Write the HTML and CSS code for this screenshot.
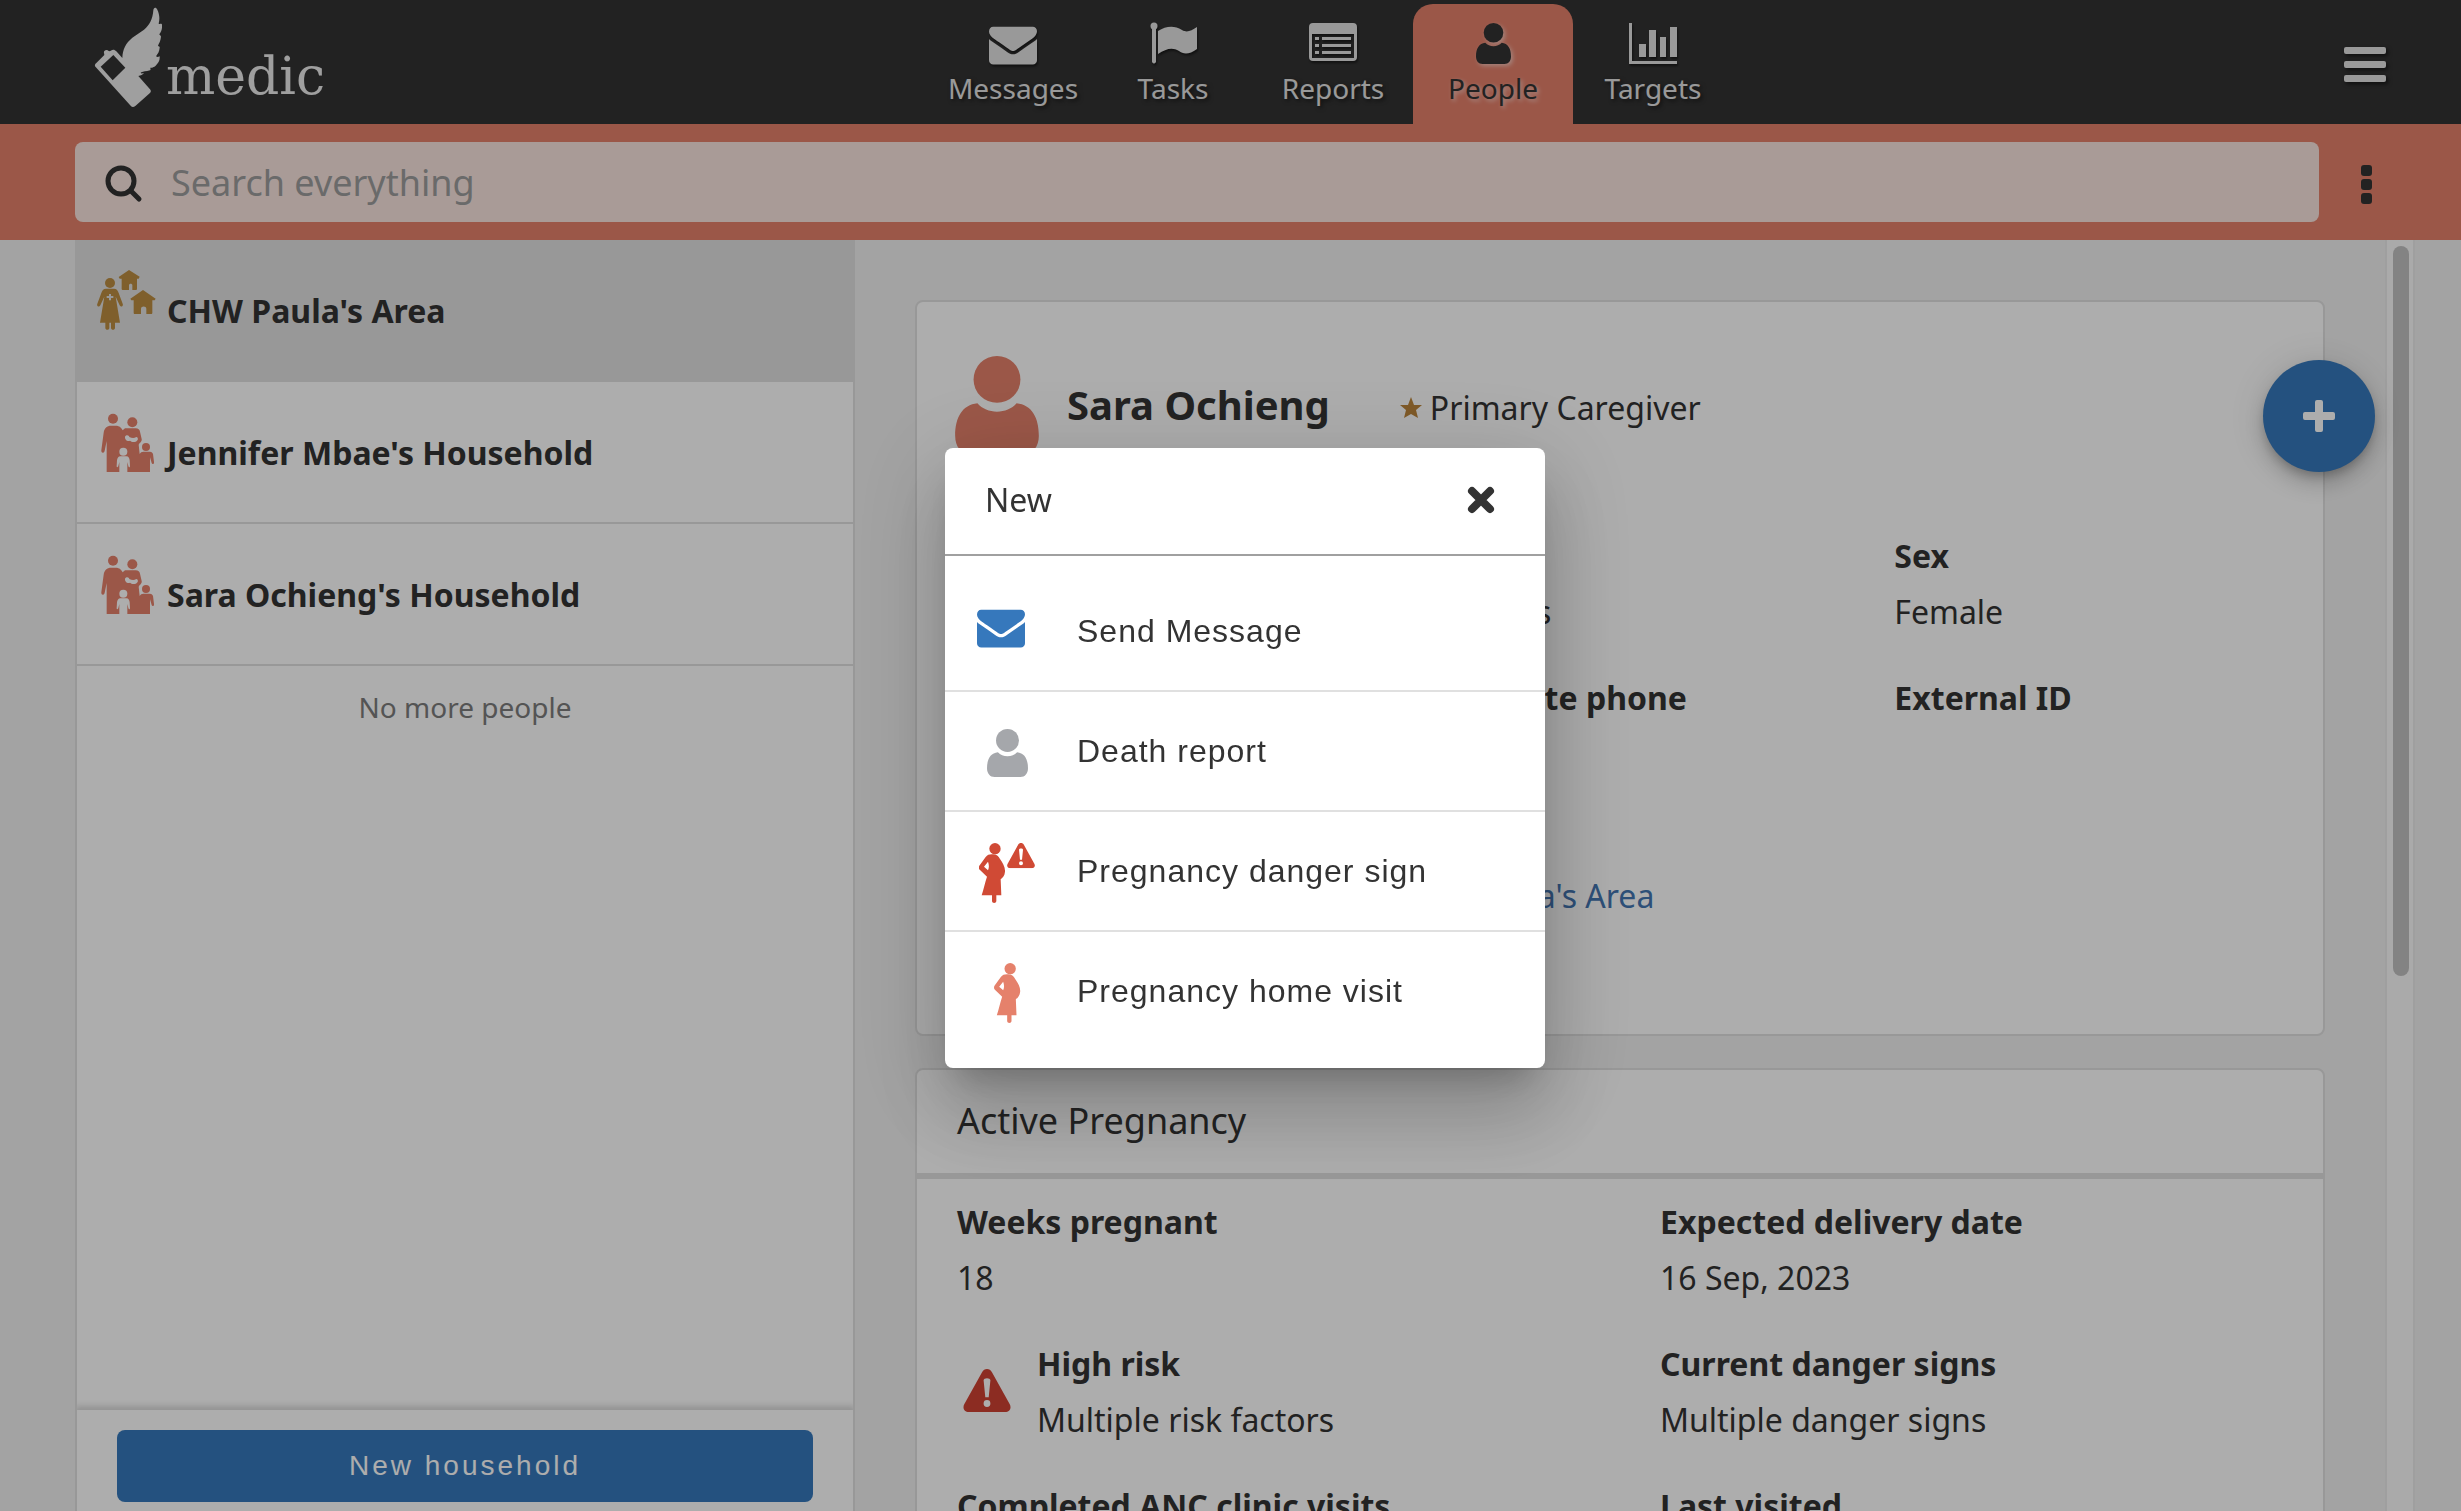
FILE: index.html
```html
<!DOCTYPE html>
<html lang="en">
<head>
<meta charset="utf-8">
<title>People - Medic</title>
<link rel="stylesheet" href="styles.css">
</head>
<body>
<svg class="sprite" aria-hidden="true">
  <symbol id="envelope" viewBox="0 0 1792 1792"><path d="M1792 710v794q0 66-47 113t-113 47h-1472q-66 0-113-47t-47-113v-794q44 49 101 87 362 246 497 345 57 42 92.500 65.500t94.500 48 110 24.500h2q51 0 110-24.500t94.500-48 92.500-65.500q170-123 498-345 57-39 100-87zm0-294q0 79-49 151t-122 123q-376 261-468 325-10 7-42.500 31t-54 38.500-52 32.500-57.500 27-50 9h-2q-23 0-50-9t-57.500-27-52-32.500-54-38.500-42.500-31q-91-64-262-182.500t-205-142.500q-62-42-117-115.500t-55-136.500q0-78 41.500-130t118.500-52h1472q65 0 112.500 47t47.500 113z"/></symbol>
  <symbol id="person" viewBox="0 0 35 41"><circle cx="17.500" cy="9.800" r="9.800"/><path d="M9.300 19.800c2 2.300 5 3.500 8.200 3.500s6.200-1.200 8.200-3.500c6.300.7 9.300 5.800 9.300 13.700 0 4.500-2.500 7.500-6.500 7.500h-22C2.500 41 0 38 0 33.500c0-7.900 3-13 9.300-13.700z"/></symbol>
  <symbol id="pregnant" viewBox="0 0 80 180"><circle cx="48" cy="17" r="17"/><path fill-rule="evenodd" d="M38 34c12-2 20 4 25 14 8 12 16 24 15 38-1 12-7 18-13 23l2 48H52v17c0 8-13 8-13 0v-17H8c6-18 10-38 16-56L3 81c-5-4-4-10-1-14l18-25c5-6 10-8 18-8zM27 56L15 71l12 11c4-9 3-18 0-26z"/></symbol>
  <symbol id="warning" viewBox="0 0 84 76"><path fill-rule="evenodd" d="M33 6c4-8 14-8 18 0l31 56c4 7 0 14-8 14H10C2 76-2 69 2 62zM36 20l3 30h6l3-30c0-5-12-5-12 0zM42 55a6 6 0 1 0 0 12 6 6 0 0 0 0-12z"/></symbol>
  <symbol id="family" viewBox="0 0 180 180">
    <circle cx="48" cy="20" r="15"/><circle cx="106" cy="31" r="15"/><circle cx="147" cy="105" r="12"/>
    <path d="M29 180V87l-6 29c-2 9-11 8-10-1l7-53c2-14 10-21 22-21h14c12 0 18 7 21 14l7-6h32c8 0 12 4 13 10l5 22c1 5-2 9-6 12l-3 5 3 28c3-5 6-7 11-7h20c5 0 8 3 9 7l3 24c1 7-6 8-7 3l-5-17v46z"/>
    <path class="family-gap" d="M84 74c4-7 12-5 13 1 8 4 15 4 21 0 7 2 6 11-2 14-8 3-13 0-17-3-7 4-16-3-15-12z"/>
    <circle class="family-gap" cx="79" cy="119" r="12"/>
    <path class="family-gap" d="M70 133h18c7 0 9 5 10 12l1 17c0 5-4 5-5 0l-3-12v30H67v-30l-3 12c-1 5-6 4-5 0l1-17c1-7 4-12 10-12z"/>
  </symbol>
  <symbol id="area" viewBox="0 0 180 180">
    <circle cx="39" cy="39" r="15"/>
    <path fill-rule="evenodd" d="M27 56h24c8 0 12 6 14 13l12 32c3 8-5 12-9 5L56 80l13 78H54v16c0 7-12 7-12 0v-16h-5v16c0 7-12 7-12 0v-16H9l13-78-12 26c-4 7-12 3-9-5l12-32c2-7 6-13 14-13zM36 72v6h-7v6h7v7h6v-7h7v-6h-7v-6z"/>
    <path d="M96 0l32 20-3 6h-5v31c0 2-1 3-3 3h-11V46c0-6-10-6-10 0v14H77c-2 0-3-1-3-3V26h-6l-3-5z"/>
    <path d="M138 60l38 26-3 5h-7v37c0 2-1 4-4 4h-14v-16c0-9-16-9-16 0v16h-19c-2 0-3-2-3-4V91h-7l-3-5z"/>
  </symbol>
</svg>

<div class="app">
  <header class="topbar">
    <a class="brand" href="#" aria-label="medic home">
      <svg class="brand-mark" viewBox="12 9 204 306" aria-hidden="true"><path fill-rule="evenodd" d="M15 187c-1-5 1-8 4-10l24-24c0-4-3-8 0-12 5-5 10-3 13 0 5 2 8-4 14-4 3 0 6 2 9 5l18 20c1-27 10-44 30-61l35-24c16-13 26-30 28-58 1-10 8-10 12-2 6 13 8 26 4 42 4 2 10-2 10 4 1 12-2 20-8 28 1 4 5 3 5 7-1 13-6 19-9 27 2 3 6 2 5 6-1 12-6 19-10 24-1 5 5 4 10 2 1 14-4 19-12 28-3 4-8 4-10 6l-6 0c0 5 2 6-1 8-12 3-20 4-26 6-4 2-1 5 8 2-3 5-10 8-17 9l35 40c4 5 3 9-1 12l-43 38c-6 5-10 4-14-1zM70 153L32 188l36 41 38-38z"/></svg>
      <span class="brand-name">medic</span>
    </a>
    <nav class="tabs">
      <a class="tab" href="#"><svg class="tab-icon" aria-hidden="true"><use href="#envelope"/></svg>Messages</a>
      <a class="tab" href="#"><svg class="tab-icon" viewBox="0 0 48 48" aria-hidden="true"><circle cx="5" cy="6" r="3.500"/><path d="M3 6h4v36q-2 3-4 0zM9 11c8-5 16-6 24-1 5 3 9 1 15-3v22c-8 6-14 5-18 2-7-4-13-2-21 3z"/></svg>Tasks</a>
      <a class="tab" href="#"><svg class="tab-icon" viewBox="0 0 48 48" aria-hidden="true"><path fill-rule="evenodd" d="M4 3h40a4 4 0 0 1 4 4v30a4 4 0 0 1-4 4H4a4 4 0 0 1-4-4V7a4 4 0 0 1 4-4zM3 14v24h42V14z"/><path d="M6 17h4v3H6zM13 17h29v3H13zM6 24h4v3H6zM13 24h29v3H13zM6 31h4v3H6zM13 31h29v3H13z"/></svg>Reports</a>
      <a class="tab tab-active" href="#"><svg class="tab-icon tab-icon-person" aria-hidden="true"><use href="#person"/></svg>People</a>
      <a class="tab" href="#"><svg class="tab-icon" viewBox="0 0 48 48" aria-hidden="true"><path d="M0 3h3v38h45v3H0zM10 24h7v13h-7zM20 10h7v27h-7zM31 17h6v20h-6zM41 7h7v30h-7z"/></svg>Targets</a>
    </nav>
    <button class="menu-button" type="button" aria-label="Menu"><span></span><span></span><span></span></button>
  </header>

  <form class="searchbar">
    <label class="search">
      <svg class="search-icon" viewBox="0 0 38 38" aria-hidden="true"><circle cx="16" cy="16" r="13"/><path d="M26 26l8 8"/></svg>
      <input class="search-input" type="search" placeholder="Search everything" aria-label="Search everything">
    </label>
    <button class="more-button" type="button" aria-label="More options"><span></span><span></span><span></span></button>
  </form>

  <div class="main">
    <aside class="sidebar">
      <ul class="places">
        <li><a class="place place-selected" href="#"><svg class="place-icon place-icon-area" aria-hidden="true"><use href="#area"/></svg><span>CHW Paula's Area</span></a></li>
        <li><a class="place" href="#"><svg class="place-icon" aria-hidden="true"><use href="#family"/></svg><span>Jennifer Mbae's Household</span></a></li>
        <li><a class="place" href="#"><svg class="place-icon" aria-hidden="true"><use href="#family"/></svg><span>Sara Ochieng's Household</span></a></li>
      </ul>
      <p class="places-end">No more people</p>
      <div class="sidebar-actions"><button class="primary-button" type="button">New household</button></div>
    </aside>

    <main class="content">
      <div class="cards">
        <section class="card profile">
          <div class="profile-head">
            <svg class="profile-icon" aria-hidden="true"><use href="#person"/></svg>
            <h1 class="profile-name">Sara Ochieng</h1>
            <p class="profile-role"><svg class="star" viewBox="0 0 22 22" aria-hidden="true"><path d="M11 0l3 8h8l-6 5 2 8-7-4-7 4 2-8-6-5h8z"/></svg>Primary Caregiver</p>
          </div>
          <dl class="fields fields-three">
            <div class="field"><dt>Name</dt><dd>Sara</dd></div>
            <div class="field"><dt>Age</dt><dd>36 years</dd></div>
            <div class="field"><dt>Sex</dt><dd>Female</dd></div>
            <div class="field"><dt>Phone</dt><dd></dd></div>
            <div class="field"><dt>Alternate phone</dt><dd></dd></div>
            <div class="field"><dt>External ID</dt><dd></dd></div>
            <div class="field field-wide"><dt>Belongs to</dt><dd class="lineage"><a href="#">Sara Ochieng's Household</a><a href="#">CHW Paula's Area</a></dd></div>
          </dl>
        </section>

        <section class="card">
          <h2 class="card-title">Active Pregnancy</h2>
          <dl class="fields fields-two">
            <div class="field"><dt>Weeks pregnant</dt><dd>18</dd></div>
            <div class="field"><dt>Expected delivery date</dt><dd>16 Sep, 2023</dd></div>
            <div class="field field-icon"><dt>High risk</dt><dd>Multiple risk factors</dd><dd class="risk"><svg class="risk-icon" aria-hidden="true"><use href="#warning"/></svg></dd></div>
            <div class="field"><dt>Current danger signs</dt><dd>Multiple danger signs</dd></div>
            <div class="field"><dt>Completed ANC clinic visits</dt><dd></dd></div>
            <div class="field"><dt>Last visited</dt><dd></dd></div>
          </dl>
        </section>
      </div>
      <div class="scroll-track" aria-hidden="true"><div class="scroll-thumb"></div></div>
      <button class="fab" type="button" aria-label="New"><svg class="fab-icon" viewBox="0 0 32 32" aria-hidden="true"><path d="M14 0h4q2 0 2 2v10h10q2 0 2 2v4q0 2-2 2H20v10q0 2-2 2h-4q-2 0-2-2V20H2q-2 0-2-2v-4q0-2 2-2h10V2q0-2 2-2z"/></svg></button>
    </main>
  </div>
</div>

<div class="overlay">
  <div class="dialog" role="dialog" aria-modal="true" aria-labelledby="dialog-title">
    <div class="dialog-head">
      <h2 class="dialog-title" id="dialog-title">New</h2>
      <button class="close-button" type="button" aria-label="Close"><svg class="close-icon" viewBox="0 0 28 28" aria-hidden="true"><path d="M5 5l18 18M23 5L5 23"/></svg></button>
    </div>
    <ul class="actions">
      <li><button class="action" type="button"><span class="action-icon action-icon-start"><svg class="icon-envelope" aria-hidden="true"><use href="#envelope"/></svg></span>Send Message</button></li>
      <li><button class="action" type="button"><span class="action-icon"><svg class="icon-person" aria-hidden="true"><use href="#person"/></svg></span>Death report</button></li>
      <li><button class="action" type="button"><span class="action-icon"><svg class="icon-danger" viewBox="0 0 180 180" aria-hidden="true"><use href="#pregnant" x="6" width="80" height="180"/><use href="#warning" x="90" width="84" height="76"/></svg></span>Pregnancy danger sign</button></li>
      <li><button class="action" type="button"><span class="action-icon"><svg class="icon-visit" aria-hidden="true"><use href="#pregnant"/></svg></span>Pregnancy home visit</button></li>
    </ul>
  </div>
</div>
</body>
</html>
```
FILE: styles.css
```css
* { box-sizing: border-box; }

body {
  margin: 0;
  background: #f1f1f1;
  color: #333;
  font: 32px/56px "Noto Sans", sans-serif;
}

h1, h2, p, ul, dl, dd { margin: 0; padding: 0; }
ul { list-style: none; }
a { color: #4375b1; text-decoration: none; }
button { margin: 0; padding: 0; border: 0; background: none; color: inherit; font: inherit; cursor: pointer; }
svg { display: block; fill: currentColor; }
.sprite { position: absolute; width: 0; height: 0; }

.app { display: flex; flex-direction: column; height: 100vh; overflow: hidden; }

/* Header */
.topbar { display: flex; flex: none; height: 124px; background: #333; color: #e2e2e2; }
.brand { display: flex; flex: 0 1 933px; padding: 7px 0 0 94px; color: #eaeaea; }
.brand-mark { width: 68px; height: 102px; }
.brand-name { padding: 44px 0 0 4px; font: 52px/50px "DejaVu Serif", serif; }
.tabs { display: flex; padding-top: 4px; }
.tab {
  display: flex; flex-direction: column; align-items: center;
  width: 160px; padding-top: 16px;
  color: inherit; font-size: 28px; line-height: 40px;
  text-shadow: 2px 2px 4px rgba(0, 0, 0, .6);
}
.tab-icon { width: 48px; height: 48px; filter: drop-shadow(1px 2px 1px rgba(0, 0, 0, .5)); }
.tab-icon-person { width: 35px; height: 41px; margin: 3px 0 4px; filter: drop-shadow(2px 2px 2px rgba(255, 255, 255, .5)); }
.tab-active {
  border-radius: 20px 20px 0 0;
  background: #e5816b; color: #333;
  text-shadow: 2px 2px 4px rgba(255, 255, 255, .6);
}
.menu-button { display: flex; flex-direction: column; gap: 7px; align-self: flex-start; margin: 47px 75px 0 auto; }
.menu-button span { width: 42px; height: 7px; border-radius: 2px; background: #e2e2e2; box-shadow: 2px 2px 4px rgba(0, 0, 0, .6); }

/* Search */
.searchbar { display: flex; flex: none; align-items: center; height: 116px; padding: 0 89px 0 75px; background: #e5816b; }
.search { display: flex; flex: 1; align-items: center; height: 80px; padding-left: 30px; border-radius: 8px; background: #f9e5df; }
.search-icon { width: 38px; height: 38px; margin-top: 4px; fill: none; stroke: #333; stroke-width: 5; stroke-linecap: round; }
.search-input {
  flex: 1; min-width: 0; height: 80px; margin: 0; padding: 0 28px;
  border: 0; outline: 0; background: none; color: #333;
  font: 36px/50px "Noto Sans", sans-serif; appearance: none;
}
.search-input::placeholder { color: #9c9c9c; opacity: 1; }
.more-button { display: flex; flex-direction: column; gap: 3px; margin: 4px 0 0 42px; }
.more-button span { width: 11px; height: 11px; border-radius: 3px; background: #333; }

/* Columns */
.main { display: grid; flex: 1; grid-template-columns: 1fr 2fr; min-height: 0; padding: 0 46px 0 75px; }

.sidebar { display: flex; flex-direction: column; min-height: 0; border: solid #e0e0e0; border-width: 0 2px; background: #fff; }
.place { display: flex; gap: 10px; height: 142px; padding: 30px 20px 28px; border-bottom: 2px solid #e0e0e0; color: #333; font-weight: 700; line-height: 82px; }
.place-selected { background: #e0e0e0; }
.place-icon { width: 60px; height: 60px; color: #e5816b; }
.place-icon-area { color: #bc8d41; }
.family-gap { fill: #fff; }
.places-end { flex: 1; padding-top: 20px; color: #7c7c7c; font-size: 28px; line-height: 42px; text-align: center; }
.sidebar-actions { flex: none; padding: 20px 40px 9px; background: #fff; box-shadow: 0 -2px 6px 2px #d8d8d8; clip-path: inset(-12px 0 0); }
.primary-button {
  width: 100%; height: 72px; border-radius: 8px;
  background: #3578bb; color: #fff;
  font: 28px/40px "Liberation Sans", sans-serif; letter-spacing: 3px;
}

.content { position: relative; display: flex; min-width: 0; min-height: 0; }
.cards { display: flex; flex: 1; flex-direction: column; gap: 32px; min-width: 0; padding: 60px 60px 0; overflow: hidden; }
.card { flex: none; border: 2px solid #e0e0e0; border-radius: 8px; background: #fff; }
.profile { padding-bottom: 110px; }
.profile-head { display: flex; align-items: center; padding: 54px 40px 74px 38px; }
.profile-icon { width: 84px; height: 98px; color: #e5816b; }
.profile-name { margin: 0 70px 0 28px; font-size: 40px; }
.profile-role { display: flex; gap: 8px; align-items: center; padding-top: 6px; }
.star { width: 22px; height: 22px; color: #bc853b; }
.card-title { padding: 23px 40px 24px; border-bottom: 6px solid #e0e0e0; font-size: 36px; font-weight: 400; }

.fields { display: grid; row-gap: 30px; }
.fields-two { grid-template-columns: 1fr 1fr; padding-top: 15px; }
.fields-three { grid-template-columns: 1fr 1fr 1fr; }
.field { padding-left: 40px; }
.field dt { font-weight: 700; }
.field dd { min-height: 56px; }
.field-wide { grid-column: 1 / -1; }
.field-icon { display: grid; grid-template-columns: 80px 1fr; }
.field-icon dt, .field-icon dd { grid-column: 2; }
.field-icon .risk { display: flex; grid-area: 1 / 1 / 3 / 2; align-items: center; padding: 0 0 4px 6px; }
.risk-icon { width: 48px; height: 43px; color: #cf4233; }
.lineage { display: flex; gap: 40px; }

.scroll-track { flex: none; width: 30px; padding: 6px; border: solid #ebebeb; border-width: 0 2px; background: #fbfbfb; }
.scroll-thumb { width: 16px; height: 730px; border-radius: 8px; background: #c2c2c2; }

.fab {
  position: absolute; top: 120px; right: 40px;
  display: grid; place-items: center; width: 112px; height: 112px;
  border-radius: 50%; background: #3578bb; color: #fff;
  box-shadow: 0 6px 10px -2px rgba(0, 0, 0, .2), 0 12px 20px rgba(0, 0, 0, .14), 0 2px 36px rgba(0, 0, 0, .12);
}
.fab-icon { width: 32px; height: 32px; }

/* Dialog */
.overlay {
  position: fixed; inset: 0;
  display: flex; align-items: center; justify-content: center;
  padding: 5px 0 0 29px; background: rgba(0, 0, 0, .32);
}
.dialog {
  width: 600px; border-radius: 8px; background: #fff;
  box-shadow: 0 22px 30px -14px rgba(0, 0, 0, .2), 0 48px 76px 6px rgba(0, 0, 0, .14), 0 18px 92px 16px rgba(0, 0, 0, .12);
}
.dialog-head { display: flex; align-items: center; justify-content: space-between; height: 108px; padding: 0 50px 2px 40px; border-bottom: 2px solid #a0a0a0; }
.dialog-title { font-size: 32px; font-weight: 400; }
.close-icon { width: 28px; height: 28px; fill: none; stroke: #333; stroke-width: 8; stroke-linecap: round; }
.actions { padding: 16px 0 18px; }
.actions li + li { border-top: 2px solid #e0e0e0; }
.action { display: flex; gap: 40px; align-items: center; width: 100%; height: 118px; padding: 0 32px; font: 32px/48px "Liberation Sans", sans-serif; letter-spacing: 1px; text-align: left; }
.action-icon { display: flex; align-items: center; justify-content: center; width: 60px; height: 60px; margin-top: 4px; }
.action-icon-start { align-items: flex-start; justify-content: flex-start; }
.icon-envelope { width: 48px; height: 48px; color: #3678bc; }
.icon-person { width: 41px; height: 48px; color: #a5a7ab; }
.icon-danger { width: 60px; height: 60px; color: #d04a35; }
.icon-visit { width: 27px; height: 60px; color: #e5816b; }
```
